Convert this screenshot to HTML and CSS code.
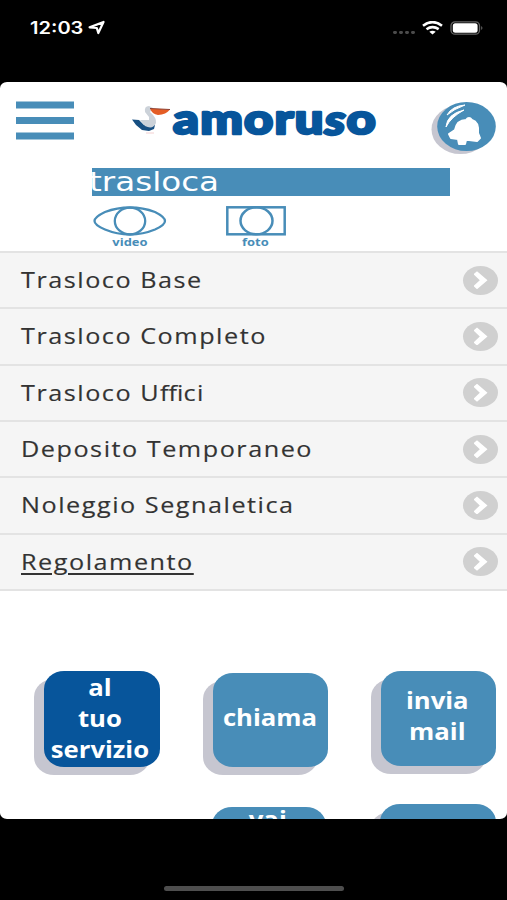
FILE: index.html
```html
<!DOCTYPE html>
<html lang="it">
<head>
<meta charset="utf-8">
<meta name="viewport" content="width=device-width, initial-scale=1">
<title>Amoruso</title>
<link rel="stylesheet" href="styles.css">
</head>
<body>
<div class="status">
  <div class="clock"><span class="time">12:03</span>
    <svg class="loc" width="18" height="16" viewBox="0 0 18 16"><path d="M1.6 7.400 15.500 2 10.300 13 8.800 8Z" fill="none" stroke="#fff" stroke-width="2.200" stroke-linejoin="round"/></svg>
  </div>
  <div class="signals">
    <svg width="92" height="16" viewBox="0 0 92 16">
      <g fill="#4b4b4b"><rect x="1" y="10" width="4" height="3" rx="1.4"/><rect x="7" y="10" width="4" height="3" rx="1.4"/><rect x="13" y="10" width="4" height="3" rx="1.4"/><rect x="19" y="10" width="4" height="3" rx="1.4"/></g>
      <g fill="none" stroke="#fff" stroke-width="2.600"><path d="M31 4.700Q40.500-2.500 50 4.700"/><path d="M34.500 8.200Q40.500 4 46.700 8.200"/></g>
      <path d="M37.300 10.700Q40.500 8.600 43.700 10.700L40.500 13.500Z" fill="#fff"/>
      <rect x="59" y="0.800" width="28.500" height="12.400" rx="4" fill="none" stroke="#666" stroke-width="1.300"/>
      <rect x="60.800" y="2.300" width="24.800" height="9.400" rx="2.500" fill="#fff"/>
      <path d="M89.300 5Q91.500 7 89.300 9Z" fill="#777"/>
    </svg>
  </div>
</div>
<main class="screen">
  <header class="topbar">
    <svg class="menu" width="58" height="39" viewBox="0 0 58 39"><path d="M0 4H58M0 19.500H58M0 35H58" stroke="#488db8" stroke-width="7"/></svg>
    <svg class="logo" width="250" height="40" viewBox="0 0 250 40">
      <path d="M2 17.500 9 18 14 23 25 23 24 27 19 29 12 28 6 23Z" fill="#174f82"/>
      <path d="M10 18 19 18 19 15 15 10Q14 4 19 4L23 6 20 10Q27 16 26 21Q23 28 15 24Z" fill="#ccd2d9"/>
      <path d="M20 6.500 40 7.500Q36 12.500 28 13 22 12 20 6.500Z" fill="#e45d25"/>
      <path d="M20 6.500 40 7.500" stroke="#8f4031" stroke-width="1"/>
      <path d="M16 31H24" stroke="#f3cfd0" stroke-width="1"/>
      <text x="43" y="31.500" class="brand" textLength="204" lengthAdjust="spacingAndGlyphs">amoru<tspan dy="1.500" font-style="italic">s</tspan><tspan dy="-1.500">o</tspan></text>
    </svg>
    <svg class="bell" width="68" height="54" viewBox="0 0 68 54">
      <ellipse cx="30.500" cy="28.500" rx="29" ry="24.500" fill="#c6c6d0"/>
      <ellipse cx="36.500" cy="25.500" rx="29.300" ry="24.500" fill="#488db8"/>
      <path d="M19 33 25 29Q27 19 36 19 39 15 42 19Q49 21 48 32L50 37 47 40 39 39 36 39 35 43 29 43 28 38 21 37Z" fill="#fff" stroke="#fff" stroke-width="2" stroke-linejoin="round"/>
      <path d="M17 14Q22 5 35 4Q24 8 17 14ZM16 26Q17 13 34 9Q21 16 16 26Z" fill="#fff" stroke="#fff" stroke-width="1"/>
    </svg>
  </header>
  <div class="banner"><span class="banner-text">trasloca</span></div>
  <nav class="media">
    <a class="medium"><svg width="74" height="31" viewBox="0 0 74 31"><g fill="none" stroke="#488db8" stroke-width="2.300"><path d="M1.500 16Q1.500 12 12 7Q24 2.500 37 2.500T62 7Q72 12 72 16T62 24.500Q50 29.500 37 29.500T12 24.500Q1.500 20 1.500 16Z"/><ellipse cx="37" cy="16" rx="15.200" ry="13.300"/></g></svg><span class="medium-label">video</span></a>
    <a class="medium photo"><svg width="60" height="31" viewBox="0 0 60 31"><g fill="none" stroke="#488db8" stroke-width="2.500"><rect x="1.300" y="2.300" width="57.400" height="27"/><ellipse cx="30.500" cy="15.800" rx="16" ry="13.500"/></g></svg><span class="medium-label">foto</span></a>
  </nav>
  <ul class="services">
    <li><span class="name">Trasloco Base</span><i class="go"></i></li>
    <li><span class="name">Trasloco Completo</span><i class="go"></i></li>
    <li><span class="name">Trasloco U<span class="tight">ffi</span>ci</span><i class="go"></i></li>
    <li><span class="name">Deposito Temporaneo</span><i class="go"></i></li>
    <li><span class="name">Noleggio Segnaletica</span><i class="go"></i></li>
    <li><span class="name under">Regolamento</span><i class="go"></i></li>
  </ul>
  <section class="actions">
    <a class="tile active"><span class="label">al<br>tuo<br>servizio</span></a>
    <a class="tile second"><span class="label">chiama</span></a>
    <a class="tile third"><span class="label">invia<br>mail</span></a>
    <span></span>
    <a class="tile lower"><span class="label">vai</span></a>
    <a class="tile last"></a>
  </section>
</main>
<div class="home"></div>
</body>
</html>
```
FILE: styles.css
```css
* { box-sizing: border-box; }
body { margin: 0; width: 507px; height: 900px; background: #000; overflow: hidden; font-family: "Open Sans", "Noto Sans", sans-serif; }
.status { height: 82px; padding: 20px 23px 0 30px; display: flex; justify-content: space-between; color: #fff; }
.clock { display: flex; height: 16px; align-items: center; }
.time { width: 52px; font: 600 17px/16px Inter, sans-serif; transform: scaleX(1.18); transform-origin: left; }
.loc { margin-left: 6px; }
.screen { height: 737px; background: #fff; border-radius: 7px / 6px; overflow: hidden; }
.topbar { height: 86px; padding: 19px 10px 0 16px; display: flex; align-items: flex-start; }
.logo { margin: 1px 0 0 56px; overflow: visible; }
.brand { font-family: Lato, sans-serif; font-weight: 900; font-size: 41px; letter-spacing: 1px; fill: #07559b; stroke: #07559b; stroke-width: 2.5px; stroke-linejoin: round; }
.bell { margin: 0 -1px 0 auto; }
.banner { margin-left: 92px; width: 358px; height: 28px; background: #488db8; color: #fff; overflow: hidden; }
.banner-text { display: inline-block; margin-left: -3px; font: 26.5px/28px "DejaVu Sans", sans-serif; transform: scaleX(1.23); transform-origin: left; }
.media { height: 55px; padding: 9px 0 0 93px; display: flex; gap: 59px; }
.medium { display: flex; flex-direction: column; align-items: center; color: #488db8; }
.medium-label { font: 700 11px/11px "Open Sans", sans-serif; transform: scaleX(1.18); }
.photo .medium-label { margin: 0 2px 0 0; }
.services { list-style: none; margin: 0; padding: 0; height: 340px; display: grid; grid-template-rows: repeat(6, 1fr); background: #f5f5f5; border-bottom: 2px solid #e3e3e3; }
.services li { display: flex; align-items: center; justify-content: space-between; padding: 0 9px 0 21px; border-top: 2px solid #e3e3e3; }
.name { font-size: 21px; line-height: 30px; letter-spacing: 1.27px; color: #333; -webkit-text-stroke: .15px #333; white-space: nowrap; transform: scaleX(1.2); transform-origin: left; }
.tight { letter-spacing: 0; }
.under { text-decoration: underline; text-decoration-thickness: 1.5px; text-underline-offset: 3px; }
.go { width: 35px; height: 29px; border-radius: 50%; background: #d0d0d0; display: grid; place-items: center; }
.go::before { content: ""; width: 14px; height: 18px; background: #fff; clip-path: polygon(0 17%, 25% 0, 100% 50%, 25% 100%, 0 83%, 45% 50%); }
.actions { display: grid; grid-template-columns: 116px 116px 116px; grid-auto-rows: 96px; column-gap: 52px; row-gap: 37px; padding: 80px 0 0 44px; }
.tile { display: grid; place-items: center; background: #488db8; color: #fff; border-radius: 20px / 18px; box-shadow: -10px 8px 0 #c6c6d0; height: 96px; }
.active { background: #07559b; }
.second { margin: 2px 0 0 1px; height: 94px; }
.third { margin-left: 1px; height: 95px; }
.lower { margin: 3px 2px 0 0; align-items: start; box-shadow: none; }
.label { margin: -7px 2px 0 0; font-size: 24px; line-height: 31px; font-weight: 700; text-align: center; transform: scaleX(1.07); }
.active .label { margin: -4px 0 0 -4px; }
.lower .label { margin-top: -4px; }
.home { margin: 67px 0 0 164px; width: 180px; height: 5px; border-radius: 3px; background: #4e4e4e; }
```
